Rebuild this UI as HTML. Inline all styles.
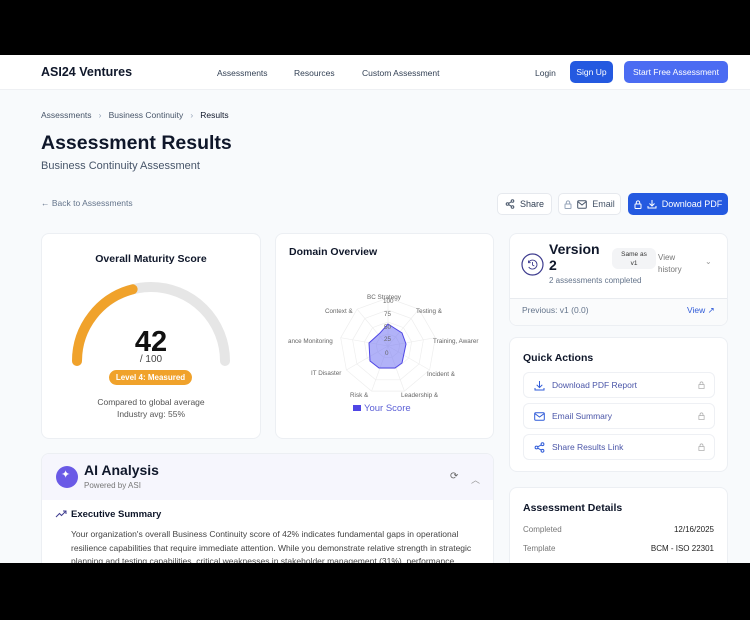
<!DOCTYPE html>
<html><head><meta charset="utf-8"><style>
*{margin:0;padding:0;box-sizing:border-box}
body{width:750px;height:620px;background:#000;position:relative;overflow:hidden;font-family:"Liberation Sans",sans-serif;color:#0f172a}
.a{position:absolute;white-space:nowrap}
#page{position:absolute;left:0;top:55px;width:750px;height:508px;background:#f8fafc;overflow:hidden}
.card{position:absolute;background:#fff;border:1px solid #eceff3;border-radius:8px}
.btn{position:absolute;border-radius:5px;font-size:9px;display:flex;align-items:center;justify-content:center;gap:5px}
.row{position:absolute;left:13px;width:192px;height:26px;border:1px solid #eef0f4;border-radius:6px;font-size:8.5px;color:#4a55a8;display:flex;align-items:center;padding-left:28px}
.lk{position:absolute;right:9px;top:8px;width:7px;height:8px}
</style></head><body>
<div id="page">
<div class="a" style="left:0;top:0;width:750px;height:35px;background:#fff;border-bottom:1px solid #eef0f3"></div>
<div class="a" style="left:41px;top:10px;font-size:12.5px;font-weight:bold">ASI24 Ventures</div>
<div class="a" style="left:217px;top:13px;font-size:8.5px;color:#334155">Assessments</div>
<div class="a" style="left:294px;top:13px;font-size:8.5px;color:#334155">Resources</div>
<div class="a" style="left:362px;top:13px;font-size:8.5px;color:#334155">Custom Assessment</div>
<div class="a" style="left:535px;top:13px;font-size:8.5px;color:#334155">Login</div>
<div class="btn" style="left:570px;top:6px;width:43px;height:22px;background:#2459e0;color:#fff;font-size:8.5px">Sign Up</div>
<div class="btn" style="left:624px;top:6px;width:104px;height:22px;background:#4b6cf2;color:#fff;font-size:8.5px">Start Free Assessment</div>
<div class="a" style="left:41px;top:55px;font-size:8.5px;color:#475569">Assessments &nbsp;&nbsp;<span style="color:#94a3b8">›</span>&nbsp;&nbsp; Business Continuity &nbsp;&nbsp;<span style="color:#94a3b8">›</span>&nbsp;&nbsp; <span style="color:#0f172a">Results</span></div>
<div class="a" style="left:41px;top:77px;font-size:19.5px;font-weight:bold">Assessment Results</div>
<div class="a" style="left:41px;top:105px;font-size:11px;color:#475569">Business Continuity Assessment</div>
<div class="a" style="left:41px;top:143px;font-size:8.5px;color:#64748b">← Back to Assessments</div>
<div class="btn" style="left:497px;top:138px;width:55px;height:22px;background:#fff;border:1px solid #e6e9ee;color:#334155">
<svg width="10" height="10" viewBox="0 0 10 10" fill="none" stroke="#475569" stroke-width="1"><circle cx="7.5" cy="2" r="1.3"/><circle cx="2.5" cy="5" r="1.3"/><circle cx="7.5" cy="8" r="1.3"/><path d="M3.6 4.4L6.4 2.7M3.6 5.6L6.4 7.3"/></svg>Share</div>
<div class="btn" style="left:558px;top:138px;width:63px;height:22px;background:#fff;border:1px solid #e6e9ee;color:#475569">
<svg width="8" height="9" viewBox="0 0 8 9" fill="none" stroke="#94a3b8"><rect x="1" y="4" width="6" height="4.5" rx=".6"/><path d="M2.3 4V2.6a1.7 1.7 0 013.4 0V4"/></svg>
<svg width="10" height="9" viewBox="0 0 10 9" fill="none" stroke="#475569"><rect x=".7" y=".7" width="8.6" height="7.6" rx="1"/><path d="M.7 1.5L5 5l4.3-3.5"/></svg>Email</div>
<div class="btn" style="left:628px;top:138px;width:100px;height:22px;background:#2459e0;color:#fff">
<svg width="8" height="9" viewBox="0 0 8 9" fill="none" stroke="#fff"><rect x="1" y="4" width="6" height="4.5" rx=".6"/><path d="M2.3 4V2.6a1.7 1.7 0 013.4 0V4"/></svg>
<svg width="10" height="10" viewBox="0 0 10 10" fill="none" stroke="#fff"><path d="M5 1v6M2.5 4.5L5 7l2.5-2.5M1 7v2h8V7"/></svg>Download PDF</div>

<div class="card" style="left:41px;top:178px;width:220px;height:206px"></div>
<div class="a" style="left:41px;top:198px;width:220px;text-align:center;font-size:10.5px;font-weight:bold">Overall Maturity Score</div>
<svg class="a" style="left:41px;top:178px" width="220" height="206">
<path d="M36 128 A74 74 0 0 1 184 128" fill="none" stroke="#e6e6e6" stroke-width="10" stroke-linecap="round"/>
<path d="M36 128 A74 74 0 0 1 91.6 56.3" fill="none" stroke="#f0a22b" stroke-width="10" stroke-linecap="round"/>
</svg>
<div class="a" style="left:41px;top:271px;width:220px;text-align:center;font-size:29px;font-weight:bold;color:#111">42</div>
<div class="a" style="left:41px;top:299px;width:220px;text-align:center;font-size:10px;color:#444">/ 100</div>
<div class="a" style="left:109px;top:315px;width:83px;height:15px;background:#f0a22b;border-radius:8px;color:#fff;font-size:8px;font-weight:bold;text-align:center;line-height:15px">Level 4: Measured</div>
<div class="a" style="left:41px;top:341px;width:220px;text-align:center;font-size:8.5px;color:#555;line-height:12px">Compared to global average<br>Industry avg: 55%</div>

<div class="card" style="left:275px;top:178px;width:219px;height:206px"></div>
<div class="a" style="left:289px;top:191px;font-size:10.5px;font-weight:bold">Domain Overview</div>
<svg class="a" style="left:275px;top:178px" width="219" height="206" font-family="Liberation Sans" font-size="6.3" fill="#666">
<g fill="none" stroke="#eee" stroke-width=".7">
<polygon points="113,65 143.9,76.2 160.3,104.7 154.6,137 129.4,158.1 96.6,158.1 71.4,137 65.7,104.7 82.1,76.2"/>
<polygon points="113,77 136.1,85.4 148.4,106.8 144.1,131 125.3,146.8 100.7,146.8 81.9,131 77.6,106.8 89.9,85.4"/>
<polygon points="113,89 128.4,94.6 136.6,108.8 133.8,125 121.2,135.6 104.8,135.6 92.2,125 89.4,108.8 97.6,94.6"/>
<polygon points="113,101 120.7,103.8 124.8,110.9 123.4,119 117.1,124.3 108.9,124.3 102.6,119 101.2,110.9 105.3,103.8"/>
<path d="M113 113V65M113 113L143.9 76.2M113 113L160.3 104.7M113 113L154.6 137M113 113L129.4 158.1M113 113L96.6 158.1M113 113L71.4 137M113 113L65.7 104.7M113 113L82.1 76.2"/>
</g>
<polygon points="113,91 127,100 131,111 127,130 120,135 104,135 95,128 94,110 105,100" fill="#6366f1" fill-opacity=".5" stroke="#4f46e5" stroke-width="1"/>
<text x="108" y="70">100</text><text x="109" y="83">75</text><text x="109" y="96">50</text><text x="109" y="108">25</text><text x="110" y="122">0</text>
<text x="92" y="66">BC Strategy</text><text x="141" y="80">Testing &amp;</text><text x="158" y="110">Training, Awarer</text>
<text x="152" y="143">Incident &amp;</text><text x="126" y="164">Leadership &amp;</text><text x="75" y="164">Risk &amp;</text>
<text x="36" y="142">IT Disaster</text><text x="13" y="110">ance Monitoring</text><text x="50" y="80">Context &amp;</text>
</svg>
<div class="a" style="left:353px;top:348px;font-size:9.5px;color:#5b5fd6"><span style="display:inline-block;width:8px;height:6px;background:#4f46e5;margin-right:3px"></span>Your Score</div>

<div class="card" style="left:509px;top:178px;width:219px;height:93px;overflow:hidden">
<div class="a" style="left:0;top:64px;width:219px;height:29px;border-top:1px solid #e8ebef;background:#fafbfc"></div>
</div>
<svg class="a" style="left:521px;top:198px" width="23" height="23" fill="none" stroke="#3f3d8f"><circle cx="11.5" cy="11.5" r="10.5" stroke-width="1.2"/><path d="M7.5 9.5a4.5 4.5 0 1 1 .2 4.5M7.5 7.5v2.2h2.2M11.5 9v3l1.8 1" stroke-width=".9"/></svg>
<div class="a" style="left:549px;top:186px;font-size:14px;font-weight:bold;line-height:16px">Version<br>2</div>
<div class="a" style="left:549px;top:221px;font-size:8px;color:#64748b">2 assessments completed</div>
<div class="a" style="left:612px;top:193px;width:44px;height:21px;background:#f3f4f6;border-radius:6px;font-size:6.5px;color:#333;text-align:center;line-height:9px;padding-top:2px">Same as<br>v1</div>
<div class="a" style="left:658px;top:197px;font-size:8px;color:#777;line-height:12px">View<br>history</div>
<div class="a" style="left:705px;top:202px;font-size:8px;color:#999">⌄</div>
<div class="a" style="left:522px;top:250px;font-size:8.5px;color:#64748b">Previous: v1 (0.0)</div>
<div class="a" style="left:687px;top:250px;font-size:8.5px;color:#2f5bd8">View ↗</div>

<div class="card" style="left:509px;top:282px;width:219px;height:135px">
<div class="a" style="left:13px;top:14px;font-size:10.5px;font-weight:bold">Quick Actions</div>
<div class="row" style="top:34px"><svg class="a" style="left:10px;top:7px" width="11" height="11" fill="none" stroke="#2f5bd8"><path d="M5.5 1v6.5M2.7 4.8l2.8 2.8 2.8-2.8M1 8v2h9V8"/></svg>Download PDF Report<svg class="lk" viewBox="0 0 8 9" fill="none" stroke="#aaa" stroke-width=".8"><rect x="1" y="4" width="6" height="4.5"/><path d="M2.3 4V2.6a1.7 1.7 0 013.4 0V4"/></svg></div>
<div class="row" style="top:65px"><svg class="a" style="left:10px;top:8px" width="11" height="9" fill="none" stroke="#2f5bd8"><rect x=".7" y=".7" width="9.6" height="7.6" rx="1"/><path d="M.7 1.5l4.8 3.5 4.8-3.5"/></svg>Email Summary<svg class="lk" viewBox="0 0 8 9" fill="none" stroke="#aaa" stroke-width=".8"><rect x="1" y="4" width="6" height="4.5"/><path d="M2.3 4V2.6a1.7 1.7 0 013.4 0V4"/></svg></div>
<div class="row" style="top:96px"><svg class="a" style="left:10px;top:7px" width="11" height="11" fill="none" stroke="#2f5bd8"><circle cx="8.5" cy="2.2" r="1.4"/><circle cx="2.5" cy="5.5" r="1.4"/><circle cx="8.5" cy="8.8" r="1.4"/><path d="M3.8 4.8l3.4-1.9M3.8 6.2l3.4 1.9"/></svg>Share Results Link<svg class="lk" viewBox="0 0 8 9" fill="none" stroke="#aaa" stroke-width=".8"><rect x="1" y="4" width="6" height="4.5"/><path d="M2.3 4V2.6a1.7 1.7 0 013.4 0V4"/></svg></div>
</div>

<div class="card" style="left:509px;top:432px;width:219px;height:100px">
<div class="a" style="left:13px;top:14px;font-size:10.5px;font-weight:bold">Assessment Details</div>
<div class="a" style="left:13px;top:37px;font-size:8px;color:#777">Completed</div>
<div class="a" style="right:13px;top:37px;font-size:8px;color:#222">12/16/2025</div>
<div class="a" style="left:13px;top:56px;font-size:8px;color:#777">Template</div>
<div class="a" style="right:13px;top:56px;font-size:8px;color:#222">BCM - ISO 22301</div>
</div>

<div class="card" style="left:41px;top:398px;width:453px;height:140px;overflow:hidden">
<div class="a" style="left:0;top:0;width:453px;height:46px;background:#f6f6fd"></div>
</div>
<div class="a" style="left:56px;top:411px;width:22px;height:22px;border-radius:50%;background:#6a5ae6"></div>
<div class="a" style="left:61px;top:413px;font-size:11px;color:#fff">✦</div>
<div class="a" style="left:84px;top:407px;font-size:14px;font-weight:bold">AI Analysis</div>
<div class="a" style="left:84px;top:426px;font-size:8px;color:#777">Powered by ASI</div>
<div class="a" style="left:450px;top:416px;font-size:10px;color:#666">⟳</div>
<div class="a" style="left:471px;top:418px;font-size:9px;color:#999">︿</div>
<svg class="a" style="left:55px;top:455px" width="12" height="8" fill="none" stroke="#3f3d8f"><path d="M1 7l3.5-3.5 2 2L11 1M8 1h3v3"/></svg>
<div class="a" style="left:71px;top:454px;font-size:9.5px;font-weight:bold">Executive Summary</div>
<div class="a" style="left:71px;top:473px;font-size:8.5px;color:#444;line-height:13.5px;white-space:normal;width:410px">Your organization's overall Business Continuity score of 42% indicates fundamental gaps in operational resilience capabilities that require immediate attention. While you demonstrate relative strength in strategic planning and testing capabilities, critical weaknesses in stakeholder management (31%), performance</div>
</div>
</body></html>
